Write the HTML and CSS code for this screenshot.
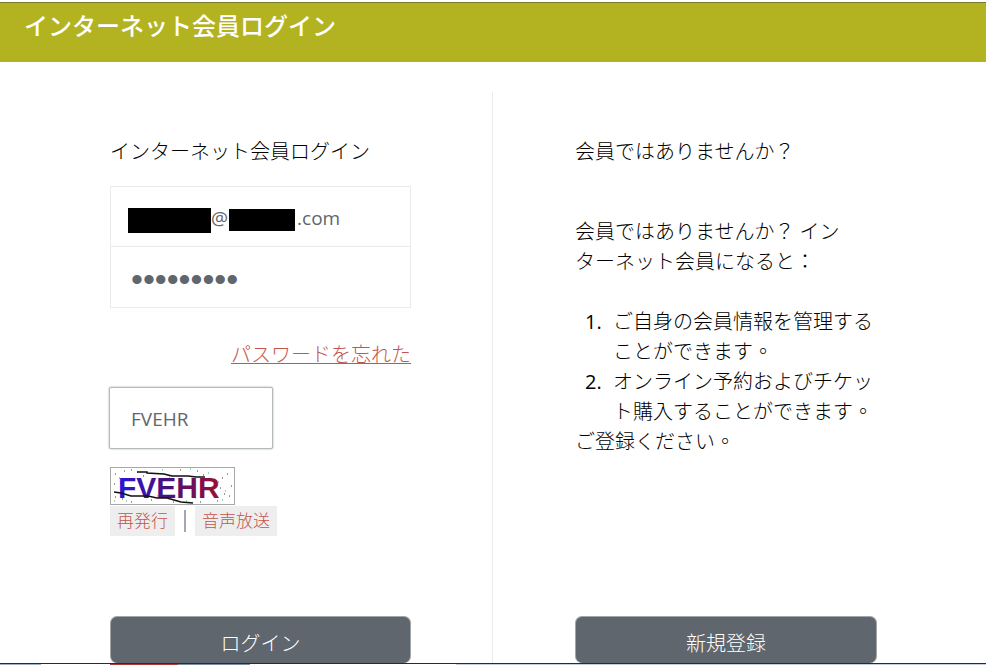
FILE: index.html
```html
<!DOCTYPE html>
<html lang="ja">
<head>
    <meta charset="UTF-8">
    <meta name="viewport" content="width=device-width, initial-scale=1.0">
    <title>インターネット会員ログイン</title>
    <link rel="stylesheet" href="styles.css">
</head>
<body>
    <header class="page-header">
        <h1>インターネット会員ログイン</h1>
    </header>

    <main class="columns">
        <!-- Login -->
        <form class="column login">
            <h2 id="login-title">インターネット会員ログイン</h2>
            <div class="credentials">
                <div class="email">
                    <input type="text" name="email" aria-labelledby="login-title" value="                 @              .com">
                    <span class="mask mask-user"></span>
                    <span class="mask mask-domain"></span>
                </div>
                <input class="password" type="password" name="password" aria-labelledby="login-title" value="123456789">
            </div>
            <a class="forgot" href="#">パスワードを忘れた</a>
            <input class="code" type="text" name="code" aria-labelledby="captcha" value="FVEHR">
            <svg class="captcha" id="captcha" role="img" aria-label="FVEHR" width="125" height="38" viewBox="0 0 125 38">
                <defs>
                    <linearGradient id="ink" gradientUnits="userSpaceOnUse" x1="8" y1="0" x2="111" y2="0">
                        <stop offset="0" stop-color="#2a16d8"/>
                        <stop offset="0.5" stop-color="#4a1078"/>
                        <stop offset="1" stop-color="#a01030"/>
                    </linearGradient>
                </defs>
                <rect x="0.5" y="0.5" width="124" height="37" fill="#fff" stroke="#a8a8a8"/>
                <path d="M5 7h1M14 4h1M10 16h1M4 17h1M21 3h1M33 9h1M70 3h1M87 4h1M93 8h1M112 11h1M117 7h1M110 21h1M119 29h1M114 27h1M107 34h1M90 35h1M63 35h1M41 33h1M21 35h1M12 32h1M5 30h1M121 19h1" stroke="#333" stroke-width="1"/>
                <path d="M9 11h1M27 5h1M59 10h1M80 2h1M98 6h1M115 24h1M112 33h1M85 31h1M47 29h1M16 34h1M4 34h1M108 15h1M52 3h1M76 34h1" stroke="#3aa66a" stroke-width="1"/>
                <text class="captcha-text" x="8" y="31" fill="url(#ink)">FVEHR</text>
                <path d="M27 5l10 0 0 1 17 1 8 2 16 0 8 1 9 0M4 25l7 1 10 3 17 0 9 2 10 0 14 4 12 1" fill="none" stroke="#111" stroke-width="1.5"/>
            </svg>
            <div class="captcha-links">
                <a href="#">再発行</a>
                <span class="separator"></span>
                <a href="#">音声放送</a>
            </div>
            <button class="submit" type="submit">ログイン</button>
        </form>

        <!-- Registration -->
        <section class="column register" lang="zh-TW">
            <h2>会員ではありませんか？</h2>
            <p class="intro">会員ではありませんか？ イン<br>ターネット会員になると：</p>
            <ol>
                <li>ご自身の会員情報を管理する<br>ことができます。</li>
                <li>オンライン予約およびチケッ<br>ト購入することができます。</li>
            </ol>
            <p>ご登録ください。</p>
            <button class="submit" type="button">新規登録</button>
        </section>
    </main>

    <footer class="page-footer"></footer>
</body>
</html>
```
FILE: styles.css
```css
* {
    box-sizing: border-box;
}
body {
    display: flex;
    flex-direction: column;
    min-height: 100vh;
    margin: 0;
    padding-top: 2px;
    background: #fff;
    color: #000;
    font-family: "Open Sans", "Noto Sans CJK TC", sans-serif;
    font-size: 20px;
    font-weight: 300;
    line-height: 30px;
}
h1, h2, p, ol {
    margin: 0;
    font-size: 20px;
    font-weight: 300;
}
input, button {
    font: inherit;
}
.page-header {
    height: 60px;
    padding: 8px 24px;
    border-top: 1px solid #77782f;
    background: #b3b321;
    color: #fff;
}
.page-header h1 {
    font-size: 24px;
    font-weight: 500;
}
.columns {
    display: grid;
    flex: 1;
    grid-template-columns: 1fr 1fr;
    padding: 30px 28px 0;
}
.column {
    display: flex;
    flex-direction: column;
    padding: 45px 81px 0 82px;
}
.login {
    border-right: 1px solid #ebebeb;
}
.credentials {
    margin-top: 19px;
    border: 1px solid #ebebeb;
}
.credentials input {
    display: block;
    width: 100%;
    height: 59px;
    padding: 2px 16px 0;
    border: 0;
    background: transparent;
    color: #5f666d;
    font-size: 19px;
    font-weight: 400;
}
.email {
    position: relative;
    border-bottom: 1px solid #ebebeb;
}
.credentials .password {
    height: 60px;
    padding: 4px 20px 0;
    font-family: "Liberation Sans", sans-serif;
    font-size: 34px;
}
.mask {
    position: absolute;
    background: #000;
}
.mask-user {
    top: 21px;
    left: 17px;
    width: 83px;
    height: 25px;
}
.mask-domain {
    top: 22px;
    left: 118px;
    width: 66px;
    height: 22px;
}
.forgot {
    align-self: flex-end;
    margin-top: 32px;
    color: #c4544c;
    text-underline-offset: 1px;
    text-decoration-thickness: 1px;
}
.code {
    width: 164px;
    height: 62px;
    margin: 17px 0 18px -1px;
    padding: 2px 21px 0;
    border: 1px solid #b4babb;
    border-radius: 2px;
    box-shadow: 0 0 2px #9aa0a2;
    color: #5f666d;
    font-size: 19px;
    font-weight: 400;
}
.captcha-text {
    font: bold 30px "Liberation Sans", sans-serif;
}
.captcha-links {
    display: flex;
    align-items: center;
    gap: 9px;
    margin-top: 1px;
    font-size: 17px;
}
.captcha-links a {
    padding: 0 7px;
    background: #eee;
    color: #c4544c;
    text-decoration: none;
}
.separator {
    width: 2px;
    height: 22px;
    background: #a5a5b5;
}
.intro {
    margin: 50px 0 30px;
}
.register ol {
    padding-left: 32px;
}
.register li {
    padding-left: 6px;
}
.register li::marker {
    font-weight: 400;
}
.submit {
    height: 47px;
    margin-top: auto;
    padding: 7px 0 0;
    border: 1px solid #a3a6a9;
    border-bottom: 0;
    border-radius: 7px;
    background: #5f666d;
    color: #fff;
}
.page-footer {
    height: 2px;
    border-top: 1px solid #1f2d3d;
    background: linear-gradient(to right, #9fb0c4 41px, #fff 41px 110px, #b03a3a 110px 178px, #7c8ea6 178px 250px, #fff 250px 456px, #c5d0dc 456px);
}
```
